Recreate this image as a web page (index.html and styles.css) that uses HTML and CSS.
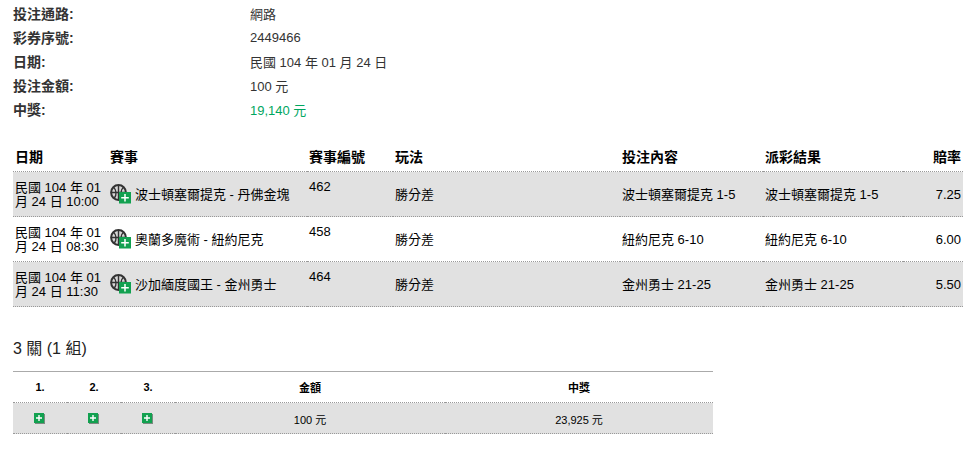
FILE: index.html
```html
<!DOCTYPE html>
<html lang="zh-Hant">
<head>
<meta charset="utf-8">
<title>投注明細</title>
<link rel="stylesheet" href="styles.css">
</head>
<body>
<svg class="defs" width="0" height="0" aria-hidden="true">
  <symbol id="plus" viewBox="0 0 11 11">
    <rect x="1" y="1" width="10" height="10" fill="#7b8a80"/>
    <rect width="10" height="10" fill="#12a150"/>
    <path d="M5 2v6M2 5h6" stroke="#fff" stroke-width="1.4" fill="none"/>
  </symbol>
  <symbol id="ball" viewBox="0 0 22 20">
    <circle cx="8.5" cy="8.5" r="7.4" fill="#d8d8d8" stroke="#333" stroke-width="2"/>
    <path d="M1.5 8.5h14M8.5 1.2v14.6M3.5 3.2c3 2.6 3.4 7.6 .8 11M13.5 3.2c-3 2.6-3.4 7.6-.8 11" stroke="#333" stroke-width="1.4" fill="none"/>
    <rect x="9" y="8" width="12" height="11.5" fill="#12a150"/>
    <path d="M15 10v7.5M11.2 13.7h7.6" stroke="#fff" stroke-width="1.5" fill="none"/>
  </symbol>
</svg>

<section class="info">
  <div class="info-row"><span class="info-label">投注通路:</span><span>網路</span></div>
  <div class="info-row"><span class="info-label">彩券序號:</span><span>2449466</span></div>
  <div class="info-row"><span class="info-label">日期:</span><span>民國 104 年 01 月 24 日</span></div>
  <div class="info-row"><span class="info-label">投注金額:</span><span>100 元</span></div>
  <div class="info-row"><span class="info-label">中獎:</span><span class="win">19,140 元</span></div>
</section>

<table class="bets">
  <colgroup>
    <col class="c-date"><col class="c-match"><col class="c-no"><col class="c-play"><col class="c-pick"><col class="c-result"><col class="c-odds">
  </colgroup>
  <thead>
    <tr><th>日期</th><th>賽事</th><th>賽事編號</th><th>玩法</th><th>投注內容</th><th>派彩結果</th><th class="odds">賠率</th></tr>
  </thead>
  <tbody>
    <tr>
      <td class="date">民國 104 年 01 月 24 日 10:00</td>
      <td><span class="match"><svg class="ball"><use href="#ball"/></svg>波士頓塞爾提克 - 丹佛金塊</span></td>
      <td class="no">462</td><td>勝分差</td><td>波士頓塞爾提克 1-5</td><td>波士頓塞爾提克 1-5</td><td class="odds">7.25</td>
    </tr>
    <tr>
      <td class="date">民國 104 年 01 月 24 日 08:30</td>
      <td><span class="match"><svg class="ball"><use href="#ball"/></svg>奧蘭多魔術 - 紐約尼克</span></td>
      <td class="no">458</td><td>勝分差</td><td>紐約尼克 6-10</td><td>紐約尼克 6-10</td><td class="odds">6.00</td>
    </tr>
    <tr>
      <td class="date">民國 104 年 01 月 24 日 11:30</td>
      <td><span class="match"><svg class="ball"><use href="#ball"/></svg>沙加緬度國王 - 金州勇士</span></td>
      <td class="no">464</td><td>勝分差</td><td>金州勇士 21-25</td><td>金州勇士 21-25</td><td class="odds">5.50</td>
    </tr>
  </tbody>
</table>

<h2 class="combo-title">3 關 (1 組)</h2>

<table class="combo">
  <colgroup>
    <col class="k-leg"><col class="k-leg"><col class="k-leg"><col class="k-amt"><col>
  </colgroup>
  <thead>
    <tr><th>1.</th><th>2.</th><th>3.</th><th>金額</th><th>中獎</th></tr>
  </thead>
  <tbody>
    <tr>
      <td><svg class="plus"><use href="#plus"/></svg></td>
      <td><svg class="plus"><use href="#plus"/></svg></td>
      <td><svg class="plus"><use href="#plus"/></svg></td>
      <td>100 元</td>
      <td>23,925 元</td>
    </tr>
  </tbody>
</table>
</body>
</html>
```

FILE: styles.css
```css
* { box-sizing: border-box; }

body {
  margin: 0;
  padding: 1px 11px 0 13px;
  background: #fff;
  color: #333;
  font-family: "Liberation Sans", "Noto Sans CJK TC", sans-serif;
  font-size: 13px;
}

.defs { position: absolute; }

.info-row {
  display: flex;
  height: 24px;
  align-items: center;
}

.info-label {
  width: 237px;
  font-size: 14px;
  font-weight: 700;
}

.win { color: #00a65f; }

.bets, .combo {
  border-collapse: separate;
  border-spacing: 0;
  table-layout: fixed;
  color: #000;
}

.bets {
  width: 950px;
  margin-top: 23px;
}

.c-date { width: 95px; }
.c-match { width: 199px; }
.c-no { width: 86px; }
.c-play { width: 227px; }
.c-pick { width: 143px; }
.c-result { width: 140px; }

.bets th {
  height: 28px;
  padding: 0 2px 4px;
  font-size: 14px;
  text-align: left;
  border-bottom: 1px dotted #999;
}

.bets td {
  height: 45px;
  padding: 2px 2px 0;
  line-height: 14px;
  border-bottom: 1px dotted #999;
}

.bets tbody tr:nth-child(odd) td,
.combo tbody td { background: #e1e1e1; }

.bets .odds { text-align: right; }

.bets .no { vertical-align: top; padding-top: 8px; }

.match {
  display: flex;
  align-items: center;
  gap: 3px;
}

.ball { width: 22px; height: 20px; flex: none; margin-top: -2px; }

.combo-title {
  margin: 32px 0 12px;
  font-size: 16px;
  font-weight: 400;
  line-height: 20px;
  color: #222;
}

.combo {
  width: 700px;
}

.combo thead th { border-top: 1px solid #aaa; }

.k-leg { width: 54px; }
.k-amt { width: 270px; }

.combo th {
  height: 32px;
  font-size: 11px;
  text-align: center;
  border-bottom: 1px dotted #999;
}

.combo td {
  height: 31px;
  padding: 1px 0 0;
  font-size: 11px;
  text-align: center;
  border-bottom: 1px dotted #999;
}

.plus { width: 11px; height: 11px; display: block; margin: 0 auto; transform: translateX(-1px); }
```
